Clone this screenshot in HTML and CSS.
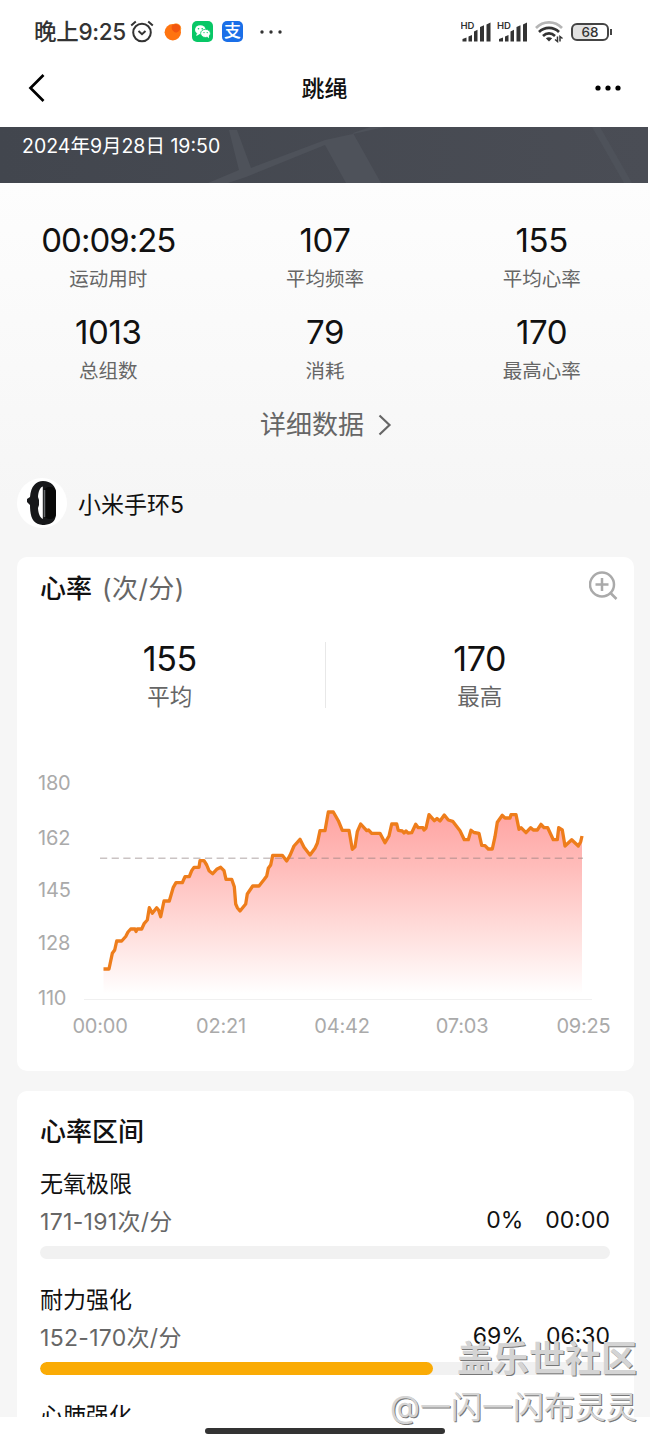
FILE: index.html
```html
<!DOCTYPE html>
<html lang="zh-CN">

<head>
    <meta charset="UTF-8">
    <meta name="viewport" content="width=device-width, initial-scale=1.0">
    <title>跳绳</title>
    <link rel="stylesheet" href="styles.css">
</head>

<body>
    <div class="screen">
        <div class="status-bar">
            <span class="clock">晚上9:25</span>
            <svg class="alarm" width="24" height="24" viewBox="0 0 24 24" fill="none" stroke="#333" stroke-width="2">
                <circle cx="12" cy="12.500" r="8.800"/>
                <path d="M8.500 11l3.500 3.200 3.500-3.200M1.200 5.500l4.600-4M22.800 5.500l-4.600-4"/>
            </svg>
            <svg class="app-dot" width="18" height="20" viewBox="0 0 18 20">
                <circle cx="12" cy="6.500" r="5.200" fill="#ffa23c"/>
                <circle cx="8.800" cy="10.300" r="8.200" fill="#ff7410"/>
                <path d="M8 3.500c3-2.500 7-2 8.300 1 .3 3.500-1.800 6-4.500 6-3-.5-5-4-3.800-7z" fill="#f2560f"/>
            </svg>
            <svg class="app-wechat" width="21" height="21" viewBox="0 0 21 21">
                <rect width="21" height="21" rx="5" fill="#08c766"/>
                <ellipse cx="8.300" cy="8.800" rx="5.300" ry="4.500" fill="#fff"/>
                <path d="M5 12l-.8 3 3-1.600z" fill="#fff"/>
                <ellipse cx="13.500" cy="12.400" rx="4.900" ry="4.100" fill="#fff" stroke="#08c766" stroke-width=".8"/>
                <path d="M15 15.500l2 1.700-.2-3z" fill="#fff"/>
                <g fill="#08c766"><circle cx="6.500" cy="7.800" r=".8"/><circle cx="10.200" cy="7.800" r=".8"/><circle cx="12" cy="11.600" r=".7"/><circle cx="15.200" cy="11.600" r=".7"/></g>
            </svg>
            <span class="app-alipay">支</span>
            <svg class="status-more" width="22" height="4" viewBox="0 0 22 4" fill="#333">
                <circle cx="2" cy="2" r="1.700"/><circle cx="11" cy="2" r="1.700"/><circle cx="20" cy="2" r="1.700"/>
            </svg>
            <svg class="signals" width="67" height="22" viewBox="0 0 67 22">
                <defs>
                    <g id="signal">
                        <text class="hd" x="-.5" y="8">HD</text>
                        <path d="M1.500 20.500v-2.500l4-1.500v4zM7.500 20.500v-5l3.500-1.500v6.500zM13 20.500V10.500l3.500-1.700v11.700zM19 20.500V6l4-1.700v16.200zM25.500 20.500V3.500l4-2v19z" fill="#333"/>
                    </g>
                </defs>
                <use href="#signal"/>
                <use href="#signal" x="36.500"/>
            </svg>
            <svg class="wifi" width="28" height="22" viewBox="0 0 28 22" fill="none" stroke="#333" stroke-width="2.600">
                <path d="M1 7C8-.5 20-.5 27 7" stroke="#b5b5b5"/>
                <path d="M4 11c5.500-5.500 14.500-5.500 20 0M8 15c3.500-3.500 8.500-3.500 12 0"/>
                <path d="M10.800 17.300q3.200-2 6.400 0L14 20.500z" fill="#333" stroke="none"/>
                <path d="M22.500 15.500v5l-2.500-2M25 20.500v-5l2.500 2" stroke-width="1.500"/>
            </svg>
            <div class="battery"><span class="battery-level">68</span></div>
        </div>

        <div class="nav-bar">
            <svg width="18" height="30" viewBox="0 0 18 30" fill="none" stroke="#000" stroke-width="2.700">
                <path d="M15.500 2L2.500 15l13 13"/>
            </svg>
            <h1>跳绳</h1>
            <svg width="26" height="6" viewBox="0 0 26 6">
                <circle cx="3" cy="3" r="2.600"/><circle cx="13" cy="3" r="2.600"/><circle cx="23" cy="3" r="2.600"/>
            </svg>
        </div>

        <div class="hero">
            <svg class="hero-map" width="648" height="56" viewBox="0 0 648 56" fill="#4e525a">
                <path d="M229 3h8l14 38 74-28 60-13h-15l-17 6 28 50h-35L325 18 246 50l-18 6h-20l31-13z"/>
                <path d="M592 0h8l32 56h-8z"/>
            </svg>
            <span class="hero-date">2024年9月28日 19:50</span>
        </div>

        <div class="content">
            <div class="stats">
                <div class="stat wide"><b>00:09:25</b><span>运动用时</span></div>
                <div class="stat"><b>107</b><span>平均频率</span></div>
                <div class="stat"><b>155</b><span>平均心率</span></div>
                <div class="stat"><b>1013</b><span>总组数</span></div>
                <div class="stat"><b>79</b><span>消耗</span></div>
                <div class="stat"><b>170</b><span>最高心率</span></div>
            </div>

            <div class="details-link">
                详细数据
                <svg width="14" height="22" viewBox="0 0 14 22" fill="none" stroke="#666" stroke-width="2.200">
                    <path d="M1.500 1.500L11.500 11l-10 9.500"/>
                </svg>
            </div>

            <div class="device">
                <div class="device-icon">
                    <svg width="30" height="44" viewBox="0 0 30 44">
                        <path d="M16 0C9 0 4 5 3 16l-3 2v3l3 3c0 10 2 18 10 19.500 2 .7 5 .7 7 0 6-1 9-4.500 9-11.500V12C29 5 24 0 16 0z" fill="#17181a"/>
                        <path d="M15.800 5.500c-3 1-4.600 5.500-4.800 10.500l1 3v5l-1 3c.2 5 1.800 9.500 4.800 11z" fill="#fff"/>
                        <rect x="17" y="6" width="12" height="32" rx="5" fill="#080808"/>
                        <path d="M17.500 9v27" stroke="#66696c" stroke-width="1.500"/>
                    </svg>
                </div>
                <span>小米手环5</span>
            </div>

            <div class="card chart-card">
                <div class="card-head">
                    <h2>心率 <small>(次/分)</small></h2>
                    <svg width="30" height="30" viewBox="0 0 30 30" fill="none" stroke="#aaa" stroke-width="2.500">
                        <circle cx="13" cy="13.500" r="12"/>
                        <path d="M13 7v13M6.500 13.500h13M21.500 22l6 6"/>
                    </svg>
                </div>
                <div class="averages">
                    <div class="average"><b>155</b><span>平均</span></div>
                    <div class="average"><b>170</b><span>最高</span></div>
                </div>
                <svg class="chart" width="617" height="300" viewBox="17 760 617 300">
                    <defs>
                        <linearGradient id="fill" gradientUnits="userSpaceOnUse" x1="0" y1="812" x2="0" y2="994">
                            <stop offset="0" stop-color="#ffa4a2"/>
                            <stop offset=".3" stop-color="#ffbcba"/>
                            <stop offset=".65" stop-color="#ffdddb"/>
                            <stop offset="1" stop-color="#fff"/>
                        </linearGradient>
                    </defs>
                    <g class="axis">
                        <text x="38" y="789.500">180</text>
                        <text x="38" y="845">162</text>
                        <text x="38" y="896.500">145</text>
                        <text x="38" y="949.500">128</text>
                        <text x="38" y="1005">110</text>
                    </g>
                    <g class="axis times">
                        <text x="100" y="1032.500">00:00</text>
                        <text x="221" y="1032.500">02:21</text>
                        <text x="342" y="1032.500">04:42</text>
                        <text x="462" y="1032.500">07:03</text>
                        <text x="583.500" y="1032.500">09:25</text>
                    </g>
                    <path d="M84 999.500h508" stroke="#f0f0f0"/>
                    <path id="area" fill="url(#fill)"/>
                    <path d="M100 858.300h483" stroke="#8a7a7a" stroke-opacity=".45" stroke-width="1.500" stroke-dasharray="7.200 4.460"/>
                    <path id="line" fill="none" stroke="#ee7d1b" stroke-width="3.300" stroke-linejoin="round"/>
                </svg>
            </div>

            <div class="card zones">
                <h2>心率区间</h2>
                <div class="zone">
                    <h3>无氧极限</h3>
                    <div class="zone-row"><span class="range">171-191次/分</span><span>0%</span><span class="time">00:00</span></div>
                    <div class="bar"></div>
                </div>
                <div class="zone">
                    <h3>耐力强化</h3>
                    <div class="zone-row"><span class="range">152-170次/分</span><span>69%</span><span class="time">06:30</span></div>
                    <div class="bar"><div class="bar-fill" style="width: 69%"></div></div>
                </div>
                <div class="zone">
                    <h3>心肺强化</h3>
                </div>
            </div>
        </div>

        <div class="home-bar"><div class="home-pill"></div></div>

        <div class="watermark">
            <strong>盖乐世社区</strong>
            <span>@一闪一闪布灵灵</span>
        </div>
    </div>

    <script>
        // heart rate curve, x,y pairs in chart units
        const points = `103.5,969 109,969 112.3,953.3 114.7,950 116.7,941 121.7,941 125.7,936.5 128,932 130.7,929
            135,929 136,931.5 137.3,929 141.7,929 144.3,923.3 147.3,920 149.3,907.7 152.3,913.3 156.7,907.7 158.5,910
            160.7,916.7 164,901 169.3,901 173.3,887.3 176,882.7 182.3,882.7 185,876.7 189.3,876.7 191.7,870.7
            194,867.3 199,867.3 200,860.7 204,860.7 206.7,865 209,870.7 212.7,873.7 216.7,869.3 220.7,867.3
            224,870.7 226,879.3 231.7,879.3 234.3,886.7 235.7,904 237.3,907.7 240,911 245.7,904 247.3,894
            252.7,886 259,886 264.3,879.3 266.7,876 268.3,868.3 270.7,865 272.7,855.3 282.3,855.3 286.7,861
            290,855.3 294,846 300,839.3 304,847.3 310,855 315,848.3 317.3,843.3 320,830.7 325,830.7 328.3,812
            333.3,812 338.3,820.7 342.3,830.3 349,830.3 352.3,849.3 355,846.7 357.3,831.7 360.7,824 366.7,830.7
            368.5,830 371.7,833.3 380,833.3 385,842.7 389,836 391.7,824 396.7,824 398.3,830.3 402.3,831 404,833
            406,831 408,833 411.7,832.7 415.7,824.3 418.3,827.7 423,827.7 424,830 426,828 429,814.7 434.3,820.7
            437,818.5 440,821 444.3,815 448.3,820 452.7,821.3 460,830.7 464.3,839.7 468.3,839.7 471,830.3
            474,832.5 479,833.3 481.7,845.3 485,845.6 488.3,849 492.3,849 495,836.7 497.3,822.3 502.3,815.3
            505,818 510,818 511,814.7 516,814.7 519,829.3 521,827.7 526,832.7 530.7,827.7 533.3,830 537.3,830
            541,824.3 544,827.7 547.7,827.7 553.3,839.7 557.3,839.7 558.7,827.7 562.3,830 565,846 571.7,839.7
            578.3,846 580.7,841.7 582,836`.trim().split(/\s+/);

        const line = 'M' + points.join('L');
        document.getElementById('line').setAttribute('d', line);
        document.getElementById('area').setAttribute('d', line + 'V994H103.500Z');
    </script>
</body>

</html>
```
FILE: styles.css
```css
body {
    margin: 0;
    font-family: Inter, "Noto Sans CJK SC", sans-serif;
    background-color: #fff;
    color: #111;
}

h1,
h2,
h3 {
    margin: 0;
    font-weight: 500;
}

svg {
    flex: none;
}

.screen {
    position: relative;
    display: flex;
    flex-direction: column;
    width: 650px;
    height: 1444px;
    overflow: hidden;
}

/* status bar */
.status-bar {
    display: flex;
    align-items: center;
    height: 63px;
    padding: 0 37px 0 34px;
    box-sizing: border-box;
    color: #333;
}

.clock {
    width: 96px;
    padding-bottom: 3px;
    font-size: 22.5px;
    font-weight: 500;
    letter-spacing: -0.3px;
    white-space: nowrap;
}

.app-dot {
    margin-left: 10px;
}

.app-wechat {
    margin-left: 10px;
}

.app-alipay {
    width: 21px;
    height: 21px;
    margin-left: 9px;
    border-radius: 5px;
    background-color: #1a6fe8;
    color: #fff;
    font-size: 17px;
    font-weight: 500;
    line-height: 20px;
    text-align: center;
}

.status-more {
    margin-left: 17px;
}

.signals {
    margin-left: auto;
}

.hd {
    font-size: 9.5px;
    font-weight: 600;
    fill: #333;
}

.wifi {
    margin-left: 7px;
}

.battery {
    position: relative;
    width: 38px;
    height: 18px;
    margin: 0 4px 0 8px;
    border: 2px solid #444;
    border-radius: 6px;
    box-sizing: border-box;
    background: linear-gradient(to right, #e2e2e2 50%, #fff 64%);
}

.battery::after {
    content: "";
    position: absolute;
    top: 4px;
    right: -5px;
    width: 2px;
    height: 6px;
    background-color: #444;
}

.battery-level {
    display: block;
    font-size: 13.5px;
    font-weight: 500;
    line-height: 14px;
    text-align: center;
}

/* title */
.nav-bar {
    display: flex;
    align-items: center;
    justify-content: space-between;
    height: 64px;
    padding: 0 29px 14px 28px;
    box-sizing: border-box;
}

.nav-bar h1 {
    margin-left: 8px;
    padding-bottom: 3px;
    font-size: 23px;
}

.hero {
    position: relative;
    width: 648px;
    height: 56px;
    background: linear-gradient(to right, #42464e, #4a4d55);
    color: #fff;
}

.hero-map {
    display: block;
}

.hero-date {
    position: absolute;
    left: 22px;
    top: 4px;
    font-size: 19.5px;
    line-height: 30px;
}

/* scrolled page */
.content {
    height: 1234px;
    overflow: hidden;
    background: linear-gradient(#fdfdfd, #f6f6f6 320px);
}

.stats {
    display: grid;
    grid-template-columns: repeat(3, 1fr);
    row-gap: 17px;
    padding-top: 37px;
}

.stat,
.average {
    display: flex;
    flex-direction: column;
    align-items: center;
}

.stat b,
.average b {
    font-size: 33px;
    font-weight: 400;
    line-height: 40px;
    letter-spacing: -0.4px;
}

.stat.wide b {
    letter-spacing: -1px;
}

.stat span {
    padding-top: 3px;
    font-size: 19.5px;
    line-height: 32px;
    color: #666;
}

.details-link {
    display: flex;
    align-items: center;
    justify-content: center;
    gap: 14px;
    height: 36px;
    margin-top: 20px;
    padding-left: 2px;
    font-size: 26px;
    line-height: 36px;
    color: #666;
}

.details-link svg {
    margin-top: -1px;
}

.device {
    display: flex;
    align-items: center;
    gap: 11px;
    height: 50px;
    margin: 35px 0 0 17px;
    font-size: 23px;
}

.device-icon {
    display: flex;
    align-items: center;
    justify-content: center;
    width: 50px;
    height: 50px;
    border-radius: 50%;
    background-color: #fff;
}

.card {
    margin: 0 16px 0 17px;
    border-radius: 10px;
    background-color: #fff;
}

.card h2 {
    font-size: 26px;
    line-height: 36px;
}

.card h2 small {
    margin-left: 3px;
    font-size: 26px;
    font-weight: 400;
    letter-spacing: 0.5px;
    color: #666;
}

.chart-card {
    height: 514px;
    margin-top: 29px;
}

.card-head {
    display: flex;
    justify-content: space-between;
    align-items: flex-start;
    padding: 14px 15px 0 23px;
}

.averages {
    display: grid;
    grid-template-columns: 1fr 1fr;
    height: 66px;
    margin-top: 35px;
}

.average {
    height: 66px;
    padding-right: 3px;
}

.average + .average {
    margin-left: -1px;
    padding: 0;
    border-left: 1px solid #e8e8e8;
}

.average b {
    margin-top: -3px;
    font-size: 34px;
}

.average span {
    font-size: 22.5px;
    line-height: 35px;
    color: #666;
}

.chart {
    display: block;
    margin-top: 52px;
}

.axis {
    font-size: 20px;
    letter-spacing: -0.2px;
    fill: #aaa;
}

.times {
    text-anchor: middle;
}

/* heart rate zones */
.zones {
    height: 400px;
    margin-top: 20px;
    padding: 23px 24px 0 23px;
    box-sizing: border-box;
}

.zone {
    height: 116px;
    padding-top: 16px;
    box-sizing: border-box;
}

.zone h3 {
    font-size: 23px;
    font-weight: 400;
    line-height: 36px;
}

.zone-row {
    display: flex;
    height: 36px;
    align-items: center;
    font-size: 23px;
}

.range {
    margin-right: auto;
    color: #666;
    letter-spacing: 0.3px;
}

.time {
    margin-left: 22px;
}

.bar {
    height: 13px;
    margin-top: 8px;
    border-radius: 7px;
    background-color: #f1f1f1;
    overflow: hidden;
}

.bar-fill {
    height: 100%;
    border-radius: 7px;
    background-color: #faab05;
}

.home-bar {
    height: 27px;
    padding-top: 11px;
    box-sizing: border-box;
    background-color: #fff;
}

.home-pill {
    width: 240px;
    height: 6px;
    margin: 0 auto;
    border-radius: 3px;
    background-color: #333;
}

.watermark {
    position: absolute;
    right: 13px;
    bottom: 13px;
    display: flex;
    flex-direction: column;
    align-items: flex-end;
    color: #d4d4d4;
    text-shadow: 1px 1px 0 #777;
}

.watermark strong {
    font-size: 36px;
    line-height: 48px;
    font-weight: 700;
}

.watermark span {
    font-size: 31px;
    line-height: 48px;
}
```
